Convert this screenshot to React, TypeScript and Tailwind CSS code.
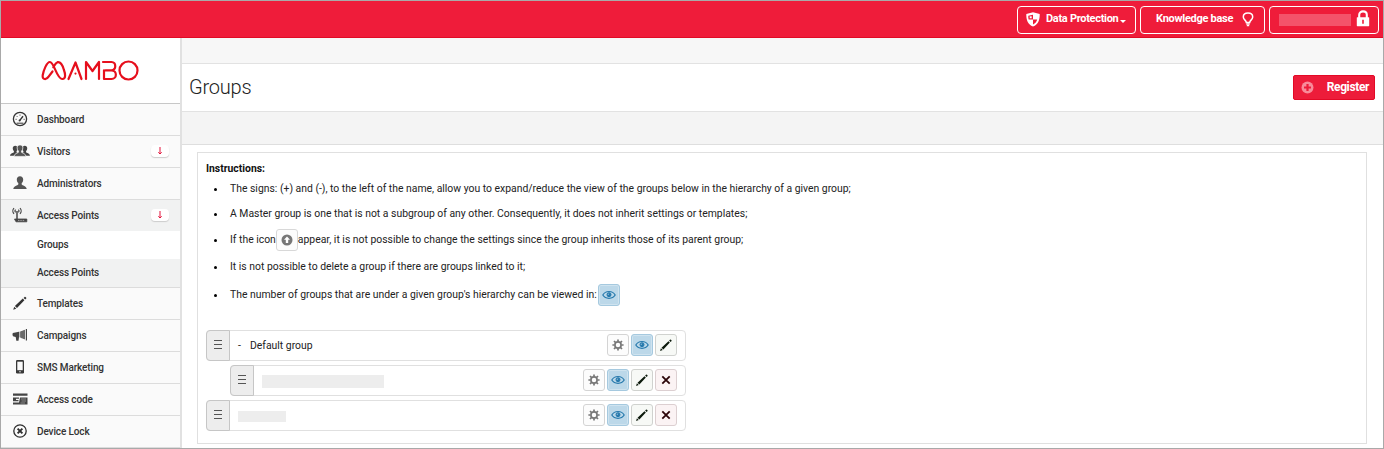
import React from "react";

type IconProps = { className?: string };

const Gauge = () => (
  <svg width="16" height="16" viewBox="0 0 16 16" fill="none" stroke="#333" strokeWidth="1.3">
    <circle cx="8" cy="8" r="6.6" />
    <path d="M7.6 9.6 11 5.2" strokeWidth="1.4" />
    <path d="M4.6 12.2h6.8M3.6 8.3h1M4.8 5.2l.7.7M8 3.6v1M11.6 8.3h1" strokeWidth="1" />
    <circle cx="7.6" cy="9.4" r="1" fill="#333" stroke="none" />
  </svg>
);
const personPath =
  "M8 1.2c2 0 3.2 1.300 3.200 3.200 0 1.500-.6 3-1.500 3.700v1.300c.5.900 4.800 1.400 5 4.600H1.300c.2-3.200 4.500-3.700 5-4.600V8.100C5.400 7.400 4.800 5.900 4.800 4.400 4.800 2.500 6 1.200 8 1.200Z";
const Person = () => (
  <svg width="16" height="16" viewBox="0 0 16 16" fill="#555">
    <path d={personPath} />
  </svg>
);
const People = () => (
  <svg width="20" height="16" viewBox="0 0 20 16">
    <g fill="#444">
      <path transform="translate(-1 1.800) scale(.78)" d={personPath} />
      <path transform="translate(8.500 1.800) scale(.78)" d={personPath} />
    </g>
    <path transform="translate(2.800 .8) scale(.9)" d={personPath} fill="#555" stroke="#fafafa" strokeWidth=".8" />
  </svg>
);
const Router = () => (
  <svg width="18" height="16" viewBox="0 0 18 16" fill="none" stroke="#444" strokeWidth="1.200">
    <path d="M3 1.200C1.500 2.700 1.500 5.300 3 6.800M9 1.200c1.500 1.500 1.500 4.100 0 5.600M4.600 2.600c-.8.800-.8 2 0 2.800M7.400 2.600c.8.800.8 2 0 2.800" />
    <path d="M6 4v8" strokeWidth="1.500" />
    <path d="M3.500 12h12.300v2.800H5Z" fill="#444" strokeWidth=".8" />
    <path d="M7 13.400h7" stroke="#ccc" strokeWidth=".7" strokeDasharray="1.500 .8" />
  </svg>
);
const Pencil = ({ className = "size-4" }: IconProps) => (
  <svg className={className} viewBox="0 0 16 16" fill="currentColor">
    <path d="m1.200 14.800 1-3.100 2.100 2.100ZM2.900 11l7.900-7.400 1.600 1.600L5 13.100ZM11.600 2.900l1.200-1.200c.5-.4 2 1.100 1.600 1.600l-1.200 1.200Z" />
  </svg>
);
const Megaphone = () => (
  <svg width="16" height="14" viewBox="0 0 16 14">
    <path d="M15 1v11.500h-1.200V1Z" fill="#444" />
    <path d="m13 1.800-5.500 2v5.500l5.500 2.200Z" fill="#777" />
    <path d="M.8 5 7 3.800V9.300L6.500 12.800H4.300L3.700 9l-2-.4C.9 8.300.5 7.200.5 6.200Z" fill="#444" />
    <path d="M10 3v7.200M12 2.300v8.700" stroke="#555" strokeWidth=".8" />
  </svg>
);
const Phone = () => (
  <svg width="10" height="16" viewBox="0 0 10 16">
    <rect x="1" y="1" width="8" height="13.500" rx="1.200" fill="#383838" />
    <rect x="2.300" y="2.700" width="5.400" height="8.500" fill="#fafafa" />
    <circle cx="5" cy="12.800" r=".7" fill="#fff" />
  </svg>
);
const Card = () => (
  <svg width="16" height="14" viewBox="0 0 16 14" fill="#444">
    <path d="M1 1.500h14.500v2.200H1ZM1 5.500h6v1.200H4V8h2.500v1.300H1ZM8 5.500h7.500v7H1v-2h6Z" />
    <path d="M9 7h5M9.500 9h4.500M8.500 11H13" stroke="#aaa" strokeWidth=".7" />
  </svg>
);
const CircleX = () => (
  <svg width="16" height="16" viewBox="0 0 16 16" fill="none" stroke="#2d2d2d">
    <circle cx="8" cy="8" r="6.200" strokeWidth="1.300" />
    <path d="m5.600 5.600 4.800 4.800m0-4.800-4.800 4.800" strokeWidth="1.900" />
  </svg>
);
const Eye = () => (
  <svg width="14" height="12" viewBox="0 0 14 12" fill="none" stroke="#2679ad">
    <path d="M.8 6C3.500 1.300 10.500 1.300 13.200 6 10.500 10.400 3.500 10.400.8 6Z" strokeWidth="1.200" />
    <circle cx="7" cy="5.700" r="2" fill="#2679ad" strokeWidth="1" />
    <path d="M6.200 5.700c0-.6.300-.9.900-.9" stroke="#cde3f0" strokeWidth=".7" />
  </svg>
);
const Gear = () => (
  <svg width="12" height="12" viewBox="0 0 12 12" fill="none" stroke="#777">
    <circle cx="6" cy="6" r="3.100" strokeWidth="1.700" />
    <path d="M6 .4v2M6 9.600v2M.4 6h2M9.600 6h2M2 2l1.500 1.500M8.500 8.500 10 10M10 2 8.500 3.500M3.500 8.500 2 10" strokeWidth="1.700" />
  </svg>
);
const Cross = () => (
  <svg width="10" height="10" viewBox="0 0 10 10" stroke="#2b0508" strokeWidth="1.800">
    <path d="m1.300 1.300 7.400 7.400m0-7.400L1.300 8.700" />
  </svg>
);
const UpCircle = () => (
  <svg width="12" height="12" viewBox="0 0 12 12">
    <circle cx="6" cy="6" r="5.500" fill="#777" />
    <path d="M6 2.400 9 5.700H7.200V9H4.800V5.700H3Z" fill="#fff" />
  </svg>
);
const Shield = () => (
  <svg width="14" height="15" viewBox="0 0 14 15">
    <path d="M7 .2 13.700 2c.2 5.800-1.500 10.400-6.700 12.600C1.800 12.400.1 7.800.3 2Z" fill="#fff" />
    <path d="M7 2.700v4.700H2.600C2.300 6.200 2.200 4.900 2.300 3.700ZM7 7.400h4.200c-.6 2.300-1.900 4-4.200 5Z" fill="#ef1c3a" />
    <path d="M3.700 4.300h2v2h-2Z" fill="#fff" />
  </svg>
);
const Bulb = () => (
  <svg width="12" height="15" viewBox="0 0 12 15" fill="none" stroke="#fff" strokeWidth="1.500">
    <path d="M4.300 10.500C4.300 8.400 1.300 7.700 1.300 4.900 1.300 2.600 3.200 1 6 1s4.700 1.600 4.700 3.900c0 2.800-3 3.500-3 5.600Z" />
    <path d="M4.300 12h3.400M4.800 13.700h2.400" strokeWidth="1.300" />
  </svg>
);
const Lock = () => (
  <svg className="-mt-0.5" width="14" height="17" viewBox="0 0 14 17">
    <path d="M3.200 8V4.800c0-4.600 7.600-4.600 7.600 0V8" fill="none" stroke="#fff" strokeWidth="2.100" />
    <rect x=".8" y="7.200" width="12.400" height="9" rx=".6" fill="#fff" />
    <path d="M7 9.700v4" stroke="#ef1c3a" strokeWidth="1.600" />
  </svg>
);
const Logo = () => (
  <svg className="-mt-0.5 ml-px" width="100" height="24" viewBox="0 0 100 24" fill="none" stroke="#e60f1c" strokeWidth="2.200" strokeLinecap="round" strokeLinejoin="round">
    <path d="M11.500 13.500 7.600 18.700C5.500 22 1 22 1.700 17.200 2.500 12.600 5.700 4 8.900 4c4.200 0 6.700 16.500 12.200 17 4.400.2 3-6 1.700-9.500C21.600 7.400 19.400 3.600 16.500 4.200c-2 .7-3.200 3.300-4.200 5" />
    <path d="M27.500 21 34.500 4.500 40.500 21M34.500 15.500v.1" />
    <path d="M45 21V4l6.500 9L58 4v17" />
    <path d="M62 4h8.500c5 0 5 8.300 0 8.300H64.500M70.500 12.300c5.800 0 5.800 8.700 0 8.700H63V12.300" />
    <circle cx="87.500" cy="12.500" r="9" />
  </svg>
);

const navItems = [
  { label: "Dashboard", icon: <Gauge /> },
  { label: "Visitors", icon: <People />, badge: true },
  { label: "Administrators", icon: <Person /> },
  { label: "Access Points", icon: <Router />, badge: true, open: true },
  { label: "Templates", icon: <Pencil className="size-4 text-[#333]" /> },
  { label: "Campaigns", icon: <Megaphone /> },
  { label: "SMS Marketing", icon: <Phone /> },
  { label: "Access code", icon: <Card /> },
  { label: "Device Lock", icon: <CircleX /> },
];

const Nav = () => (
  <nav className="text-[10px] font-medium tracking-[-0.13px] text-[#333]">
    {navItems.map((item) => (
      <React.Fragment key={item.label}>
        <div
          className={
            item.open
              ? "flex h-[31px] items-center bg-[#f1f2f2] pb-px"
              : "flex h-8 items-center border-b border-[#dcdcdc] bg-[#fafafa] pb-px"
          }
        >
          <span className="flex w-9 justify-center pl-[2px]">{item.icon}</span>
          <span className="flex-1">{item.label}</span>
          {item.badge && (
            <span className="mr-[11px] flex h-3 w-[18px] items-center justify-center rounded-sm bg-white shadow-[0_1px_1px_#ccc]">
              <svg width="6" height="8" viewBox="0 0 6 8" fill="none" stroke="#e3123a">
                <path d="M3 0v7M1.300 5.300 3 7l1.700-1.700" />
              </svg>
            </span>
          )}
        </div>
        {item.open && (
          <div>
            <div className="flex h-7 items-center bg-white pb-px pl-9">Groups</div>
            <div className="flex h-[29px] items-center border-b border-[#dcdcdc] bg-[#f1f2f2] pb-px pl-9">Access Points</div>
          </div>
        )}
      </React.Fragment>
    ))}
  </nav>
);

type Kind = "gear" | "eye" | "pencil" | "cross" | "up";
const kindStyles: Record<Kind, string> = {
  gear: "border-[#d4d4d4] bg-[#fcfcfc]",
  up: "border-[#d8d8d8] bg-[#fcfcfc]",
  eye: "border-[#a5c9df] bg-[#bcd8e9] shadow-[inset_0_0_0_1px_#cfe3ef]",
  pencil: "border-[#d0d2cf] bg-[#f7f9f6] text-[#0c1a0c]",
  cross: "border-[#dccfd1] bg-[#fbf3f4]",
};
const IconButton = ({ kind }: { kind: Kind }) => (
  <button className={`flex size-[22px] shrink-0 items-center justify-center rounded-[3px] border ${kindStyles[kind]}`}>
    {kind === "gear" && <Gear />}
    {kind === "up" && <UpCircle />}
    {kind === "eye" && <Eye />}
    {kind === "pencil" && <Pencil className="size-3.5" />}
    {kind === "cross" && <Cross />}
  </button>
);

const GroupRow = ({ nested, kinds, children }: { nested?: boolean; kinds: Kind[]; children: React.ReactNode }) => (
  <div className={`flex h-[31px] items-stretch rounded-sm border border-[#e0e0e0] ${nested ? "ml-6" : ""}`}>
    <div className="-my-px -ml-px flex w-6 items-center justify-center rounded-l-sm border border-[#c6c6c6] bg-[#ededed] pb-0.5">
      <svg width="8" height="9" viewBox="0 0 8 9" stroke="#555">
        <path d="M0 .5h8M0 4.500h8M0 8.500h8" />
      </svg>
    </div>
    <div className="flex flex-1 items-center pl-2">{children}</div>
    <div className="flex items-start gap-0.5 pt-[3px] pr-2">
      {kinds.map((k) => (
        <IconButton key={k} kind={k} />
      ))}
    </div>
  </div>
);

const Instruction = ({ className, children }: { className: string; children: React.ReactNode }) => (
  <li className={`flex items-center whitespace-nowrap ${className}`}>
    <span className="mr-[13px] ml-2 size-[3px] rounded-full bg-black" />
    {children}
  </li>
);

export default function App() {
  return (
    <div className="flex h-[449px] w-[1384px] flex-col overflow-hidden border border-[#a9a9a9] bg-white font-['Roboto',sans-serif] text-[#222]">
      <header className="flex h-[37px] shrink-0 items-center justify-end gap-1 border-b border-[#e00b25] bg-[#ef1c3a] pt-px pr-1 text-[11px] font-bold text-white">
        <button className="flex h-7 w-[119px] items-center rounded-[4px] border border-white pl-[8px]">
          <Shield />
          <span className="ml-1.5 whitespace-nowrap tracking-[-0.3px]">Data Protection</span>
          <svg className="mt-1 ml-0.5" width="6" height="3" viewBox="0 0 6 3">
            <path d="M0 0h6L3 3Z" fill="#fff" />
          </svg>
        </button>
        <button className="flex h-7 w-[125px] items-center justify-between rounded-[4px] border border-white pr-[10px] pl-[15px]">
          <span className="whitespace-nowrap tracking-[-0.28px]">Knowledge base</span>
          <Bulb />
        </button>
        <button className="flex h-7 w-[110px] items-center justify-between rounded-[4px] border border-white pr-2 pl-[9px]">
          <span className="h-3 w-[72px] bg-[#f4536b]" />
          <Lock />
        </button>
      </header>
      <div className="flex min-h-0 flex-1">
        <aside className="w-[181px] shrink-0 border-r-2 border-[#e1e1e1]">
          <div className="flex h-[66px] items-center justify-center border-b border-[#c7c7c7]">
            <Logo />
          </div>
          <Nav />
        </aside>
        <main className="flex flex-1 flex-col">
          <div className="h-[26px] shrink-0 border-b border-[#e2e2e2] bg-[#f7f7f7]" />
          <div className="flex h-12 shrink-0 items-center justify-between border-b border-[#e2e2e2] pr-2 pl-[7px]">
            <h1 className="-mt-0.5 text-[20px] font-light tracking-[-0.2px] text-[#222]">Groups</h1>
            <button className="-mt-px flex h-[25px] w-[82px] items-center justify-between rounded-[2px] border border-[#e30926] bg-[#ed1c3a] pr-[5px] pl-[7px] text-[12px] font-bold text-white">
              <svg width="13" height="13" viewBox="0 0 13 13">
                <circle cx="6.500" cy="6.500" r="6" fill="#f88b9a" />
                <path d="M6.500 3v7M3 6.500h7" stroke="#ed1c3a" strokeWidth="2.200" />
              </svg>
              <span className="-mt-px tracking-[-0.38px]">Register</span>
            </button>
          </div>
          <div className="h-[33px] shrink-0 border-b border-[#dedede] bg-[#f4f4f4]" />
          <section className="mt-[7px] mr-4 ml-[15px] h-[292px] shrink-0 border border-[#e0e0e0] pt-[9px] pl-2 text-[10.4px] leading-[14px]">
            <p className="font-bold text-[#111]">Instructions:</p>
            <ul>
              <Instruction className="mt-[2px] h-[22px]">
                <span>The signs: (+) and (-), to the left of the name, allow you to expand/reduce the view of the groups below in the hierarchy of a given group;</span>
              </Instruction>
              <Instruction className="mt-[3px] h-[22px]">
                <span>A Master group is one that is not a subgroup of any other. Consequently, it does not inherit settings or templates;</span>
              </Instruction>
              <Instruction className="mt-[4px] h-[22px]">
                <span>If the icon</span>
                <IconButton kind="up" />
                <span>appear, it is not possible to change the settings since the group inherits those of its parent group;</span>
              </Instruction>
              <Instruction className="mt-[5px] h-[22px]">
                <span>It is not possible to delete a group if there are groups linked to it;</span>
              </Instruction>
              <Instruction className="mt-[6px] h-[22px]">
                <span className="mr-px">The number of groups that are under a given group's hierarchy can be viewed in:</span>
                <IconButton kind="eye" />
              </Instruction>
            </ul>
            <div className="mt-6 flex w-[480px] flex-col gap-1">
              <GroupRow kinds={["gear", "eye", "pencil"]}>
                <span className="w-3">-</span>
                <span>Default group</span>
              </GroupRow>
              <GroupRow nested kinds={["gear", "eye", "pencil", "cross"]}>
                <span className="mt-0.5 h-[13px] w-[122px] bg-[#ededed]" />
              </GroupRow>
              <GroupRow kinds={["gear", "eye", "pencil", "cross"]}>
                <span className="mt-0.5 h-[11px] w-12 bg-[#ededed]" />
              </GroupRow>
            </div>
          </section>
        </main>
      </div>
    </div>
  );
}
